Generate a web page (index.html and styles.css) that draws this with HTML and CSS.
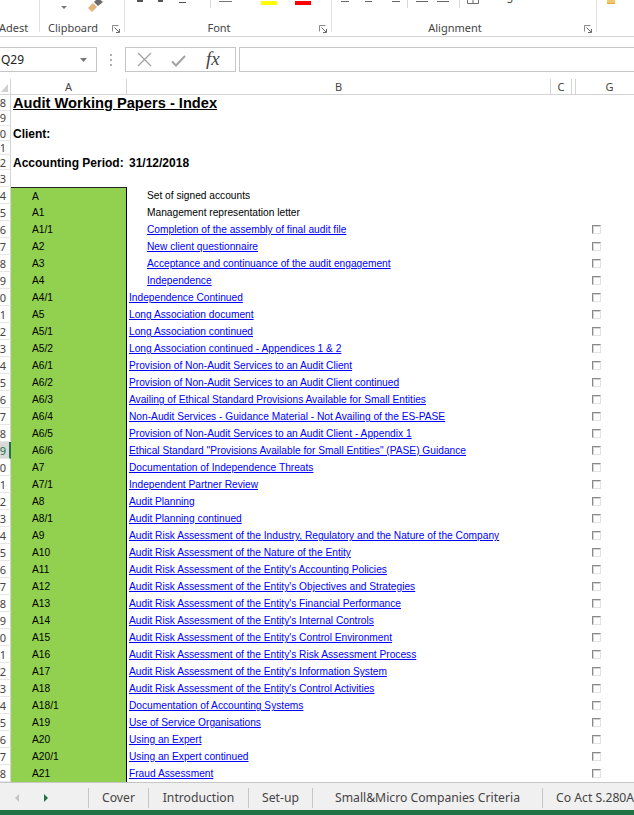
FILE: index.html
```html
<!DOCTYPE html>
<html>
<head>
<meta charset="utf-8">
<title>Audit Working Papers - Index</title>
<link rel="stylesheet" href="styles.css">
</head>
<body>
<div class="ribbon">
  <div class="grp g1">
    <div class="ctrls"></div>
    <div class="glrow"><span class="glabel left">Adest</span></div>
  </div>
  <div class="sep"></div>
  <div class="grp g2">
    <div class="ctrls">
      <span class="caret-s"></span>
      <svg class="brush" width="16" height="12" viewBox="0 0 16 12"><polygon points="0,8 5,3 9,7 4,12" fill="#e4b47a"/><polygon points="6,2 10,-2 15,2 10,6" fill="#6b6b6b"/></svg>
    </div>
    <div class="glrow"><span class="glabel left clip">Clipboard</span>
      <svg class="launch" width="8" height="8" viewBox="0 0 8 8"><path d="M0.5 6.5V0.5H6.5" stroke="#8a8a8a" fill="none"/><path d="M2.5 2.5L7 7M7.5 4v3.5H4" stroke="#6d6d6d" fill="none"/></svg>
    </div>
  </div>
  <div class="sep"></div>
  <div class="grp g3">
    <div class="ctrls">
      <span class="mk m1"></span><span class="mk m2"></span><span class="mk m3"></span>
      <span class="isep s1"></span>
      <span class="bline"></span>
      <span class="cbar yellow"></span><span class="cbar red"></span>
    </div>
    <div class="glrow"><span class="glabel">Font</span>
      <svg class="launch" width="8" height="8" viewBox="0 0 8 8"><path d="M0.5 6.5V0.5H6.5" stroke="#8a8a8a" fill="none"/><path d="M2.5 2.5L7 7M7.5 4v3.5H4" stroke="#6d6d6d" fill="none"/></svg>
    </div>
  </div>
  <div class="sep"></div>
  <div class="grp g4">
    <div class="ctrls">
      <span class="al a1"></span><span class="al a2"></span><span class="al a3"></span>
      <span class="isep s2"></span>
      <span class="indic i1"></span><span class="indic i2"></span>
      <span class="isep s3"></span>
      <svg class="merge" width="12" height="4" viewBox="0 0 12 4"><path d="M0.5 0V3.5H11.5V0M6 0V3.5" stroke="#6d6d6d" fill="none"/></svg>
      <span class="mtext">Merge &amp; Center</span>
    </div>
    <div class="glrow"><span class="glabel">Alignment</span>
      <svg class="launch" width="8" height="8" viewBox="0 0 8 8"><path d="M0.5 6.5V0.5H6.5" stroke="#8a8a8a" fill="none"/><path d="M2.5 2.5L7 7M7.5 4v3.5H4" stroke="#6d6d6d" fill="none"/></svg>
    </div>
  </div>
  <div class="sep"></div>
  <div class="grp g5">
    <div class="ctrls"><span class="cond"></span></div>
  </div>
</div>

<div class="fbar">
  <div class="namebox"><span>Q29</span>
    <svg width="7" height="4" viewBox="0 0 7 4"><polygon points="0,0 7,0 3.5,4" fill="#777"/></svg>
  </div>
  <svg class="dots" width="2" height="14" viewBox="0 0 2 14"><rect x="0" y="1" width="2" height="2" fill="#b0b0b0"/><rect x="0" y="6" width="2" height="2" fill="#b0b0b0"/><rect x="0" y="11" width="2" height="2" fill="#b0b0b0"/></svg>
  <div class="fxbox">
    <svg class="xicon" width="15" height="15" viewBox="0 0 15 15"><path d="M1 1L14 14M14 1L1 14" stroke="#a3a3a3" stroke-width="1.3"/></svg>
    <svg class="vicon" width="15" height="12" viewBox="0 0 15 12"><path d="M1 6.5L5 10.5L14 1" stroke="#a3a3a3" stroke-width="2" fill="none"/></svg>
    <span class="fx">fx</span>
  </div>
  <div class="finput"></div>
</div>

<div class="sheet">
  <div class="r colhdr">
    <div class="corner"><svg width="7" height="8" viewBox="0 0 7 8"><polygon points="7,0 7,8 0,8" fill="#d0d0d0"/></svg></div>
    <div class="hc">A</div><div class="hc">B</div><div class="hc">C</div><div class="hc hid"></div><div class="hc nob">G</div>
  </div>

  <div class="r h15"><div class="rh">8</div><div class="c ca"><span class="title">Audit Working Papers - Index</span></div><div class="c"></div><div class="c"></div><div class="c"></div><div class="c"></div></div>
  <div class="r h16"><div class="rh">9</div><div class="c ca"></div><div class="c"></div><div class="c"></div><div class="c"></div><div class="c"></div></div>
  <div class="r h15"><div class="rh">10</div><div class="c ca"><span class="lbl">Client:</span></div><div class="c"></div><div class="c"></div><div class="c"></div><div class="c"></div></div>
  <div class="r h14"><div class="rh">11</div><div class="c ca"></div><div class="c"></div><div class="c"></div><div class="c"></div><div class="c"></div></div>
  <div class="r h15"><div class="rh">12</div><div class="c ca"><span class="lbl">Accounting Period:</span></div><div class="c cb"><span class="lbl">31/12/2018</span></div><div class="c"></div><div class="c"></div><div class="c"></div></div>
  <div class="r h17"><div class="rh">13</div><div class="c ca"></div><div class="c"></div><div class="c"></div><div class="c"></div><div class="c"></div></div>

  <div class="r d first"><div class="rh">14</div><div class="c ca g">A</div><div class="c cb indent">Set of signed accounts</div><div class="c"></div><div class="c"></div><div class="c cg"></div></div>
  <div class="r d"><div class="rh">15</div><div class="c ca g">A1</div><div class="c cb indent">Management representation letter</div><div class="c"></div><div class="c"></div><div class="c cg"></div></div>
  <div class="r d"><div class="rh">16</div><div class="c ca g">A1/1</div><div class="c cb indent"><a href="#">Completion of the assembly of final audit file</a></div><div class="c"></div><div class="c"></div><div class="c cg"><span class="cbx"></span></div></div>
  <div class="r d"><div class="rh">17</div><div class="c ca g">A2</div><div class="c cb indent"><a href="#">New client questionnaire</a></div><div class="c"></div><div class="c"></div><div class="c cg"><span class="cbx"></span></div></div>
  <div class="r d"><div class="rh">18</div><div class="c ca g">A3</div><div class="c cb indent"><a href="#">Acceptance and continuance of the audit engagement</a></div><div class="c"></div><div class="c"></div><div class="c cg"><span class="cbx"></span></div></div>
  <div class="r d"><div class="rh">19</div><div class="c ca g">A4</div><div class="c cb indent"><a href="#">Independence</a></div><div class="c"></div><div class="c"></div><div class="c cg"><span class="cbx"></span></div></div>
  <div class="r d"><div class="rh">20</div><div class="c ca g">A4/1</div><div class="c cb"><a href="#">Independence Continued</a></div><div class="c"></div><div class="c"></div><div class="c cg"><span class="cbx"></span></div></div>
  <div class="r d"><div class="rh">21</div><div class="c ca g">A5</div><div class="c cb"><a href="#">Long Association document</a></div><div class="c"></div><div class="c"></div><div class="c cg"><span class="cbx"></span></div></div>
  <div class="r d"><div class="rh">22</div><div class="c ca g">A5/1</div><div class="c cb"><a href="#">Long Association continued</a></div><div class="c"></div><div class="c"></div><div class="c cg"><span class="cbx"></span></div></div>
  <div class="r d"><div class="rh">23</div><div class="c ca g">A5/2</div><div class="c cb"><a href="#">Long Association continued - Appendices 1 &amp; 2</a></div><div class="c"></div><div class="c"></div><div class="c cg"><span class="cbx"></span></div></div>
  <div class="r d"><div class="rh">24</div><div class="c ca g">A6/1</div><div class="c cb"><a href="#">Provision of Non-Audit Services to an Audit Client</a></div><div class="c"></div><div class="c"></div><div class="c cg"><span class="cbx"></span></div></div>
  <div class="r d"><div class="rh">25</div><div class="c ca g">A6/2</div><div class="c cb"><a href="#">Provision of Non-Audit Services to an Audit Client continued</a></div><div class="c"></div><div class="c"></div><div class="c cg"><span class="cbx"></span></div></div>
  <div class="r d"><div class="rh">26</div><div class="c ca g">A6/3</div><div class="c cb"><a href="#">Availing of Ethical Standard Provisions Available for Small Entities</a></div><div class="c"></div><div class="c"></div><div class="c cg"><span class="cbx"></span></div></div>
  <div class="r d"><div class="rh">27</div><div class="c ca g">A6/4</div><div class="c cb"><a href="#">Non-Audit Services - Guidance Material - Not Availing of the ES-PASE</a></div><div class="c"></div><div class="c"></div><div class="c cg"><span class="cbx"></span></div></div>
  <div class="r d"><div class="rh">28</div><div class="c ca g">A6/5</div><div class="c cb"><a href="#">Provision of Non-Audit Services to an Audit Client - Appendix 1</a></div><div class="c"></div><div class="c"></div><div class="c cg"><span class="cbx"></span></div></div>
  <div class="r d"><div class="rh sel">29</div><div class="c ca g">A6/6</div><div class="c cb"><a href="#">Ethical Standard "Provisions Available for Small Entities" (PASE) Guidance</a></div><div class="c"></div><div class="c"></div><div class="c cg"><span class="cbx"></span></div></div>
  <div class="r d"><div class="rh">30</div><div class="c ca g">A7</div><div class="c cb"><a href="#">Documentation of Independence Threats</a></div><div class="c"></div><div class="c"></div><div class="c cg"><span class="cbx"></span></div></div>
  <div class="r d"><div class="rh">31</div><div class="c ca g">A7/1</div><div class="c cb"><a href="#">Independent Partner Review</a></div><div class="c"></div><div class="c"></div><div class="c cg"><span class="cbx"></span></div></div>
  <div class="r d"><div class="rh">32</div><div class="c ca g">A8</div><div class="c cb"><a href="#">Audit Planning</a></div><div class="c"></div><div class="c"></div><div class="c cg"><span class="cbx"></span></div></div>
  <div class="r d"><div class="rh">33</div><div class="c ca g">A8/1</div><div class="c cb"><a href="#">Audit Planning continued</a></div><div class="c"></div><div class="c"></div><div class="c cg"><span class="cbx"></span></div></div>
  <div class="r d"><div class="rh">34</div><div class="c ca g">A9</div><div class="c cb"><a href="#">Audit Risk Assessment of the Industry, Regulatory and the Nature of the Company</a></div><div class="c"></div><div class="c"></div><div class="c cg"><span class="cbx"></span></div></div>
  <div class="r d"><div class="rh">35</div><div class="c ca g">A10</div><div class="c cb"><a href="#">Audit Risk Assessment of the Nature of the Entity</a></div><div class="c"></div><div class="c"></div><div class="c cg"><span class="cbx"></span></div></div>
  <div class="r d"><div class="rh">36</div><div class="c ca g">A11</div><div class="c cb"><a href="#">Audit Risk Assessment of the Entity's Accounting Policies</a></div><div class="c"></div><div class="c"></div><div class="c cg"><span class="cbx"></span></div></div>
  <div class="r d"><div class="rh">37</div><div class="c ca g">A12</div><div class="c cb"><a href="#">Audit Risk Assessment of the Entity's Objectives and Strategies</a></div><div class="c"></div><div class="c"></div><div class="c cg"><span class="cbx"></span></div></div>
  <div class="r d"><div class="rh">38</div><div class="c ca g">A13</div><div class="c cb"><a href="#">Audit Risk Assessment of the Entity's Financial Performance</a></div><div class="c"></div><div class="c"></div><div class="c cg"><span class="cbx"></span></div></div>
  <div class="r d"><div class="rh">39</div><div class="c ca g">A14</div><div class="c cb"><a href="#">Audit Risk Assessment of the Entity's Internal Controls</a></div><div class="c"></div><div class="c"></div><div class="c cg"><span class="cbx"></span></div></div>
  <div class="r d"><div class="rh">40</div><div class="c ca g">A15</div><div class="c cb"><a href="#">Audit Risk Assessment of the Entity's Control Environment</a></div><div class="c"></div><div class="c"></div><div class="c cg"><span class="cbx"></span></div></div>
  <div class="r d"><div class="rh">41</div><div class="c ca g">A16</div><div class="c cb"><a href="#">Audit Risk Assessment of the Entity's Risk Assessment Process</a></div><div class="c"></div><div class="c"></div><div class="c cg"><span class="cbx"></span></div></div>
  <div class="r d"><div class="rh">42</div><div class="c ca g">A17</div><div class="c cb"><a href="#">Audit Risk Assessment of the Entity's Information System</a></div><div class="c"></div><div class="c"></div><div class="c cg"><span class="cbx"></span></div></div>
  <div class="r d"><div class="rh">43</div><div class="c ca g">A18</div><div class="c cb"><a href="#">Audit Risk Assessment of the Entity's Control Activities</a></div><div class="c"></div><div class="c"></div><div class="c cg"><span class="cbx"></span></div></div>
  <div class="r d"><div class="rh">44</div><div class="c ca g">A18/1</div><div class="c cb"><a href="#">Documentation of Accounting Systems</a></div><div class="c"></div><div class="c"></div><div class="c cg"><span class="cbx"></span></div></div>
  <div class="r d"><div class="rh">45</div><div class="c ca g">A19</div><div class="c cb"><a href="#">Use of Service Organisations</a></div><div class="c"></div><div class="c"></div><div class="c cg"><span class="cbx"></span></div></div>
  <div class="r d"><div class="rh">46</div><div class="c ca g">A20</div><div class="c cb"><a href="#">Using an Expert</a></div><div class="c"></div><div class="c"></div><div class="c cg"><span class="cbx"></span></div></div>
  <div class="r d"><div class="rh">47</div><div class="c ca g">A20/1</div><div class="c cb"><a href="#">Using an Expert continued</a></div><div class="c"></div><div class="c"></div><div class="c cg"><span class="cbx"></span></div></div>
  <div class="r d"><div class="rh">48</div><div class="c ca g">A21</div><div class="c cb"><a href="#">Fraud Assessment</a></div><div class="c"></div><div class="c"></div><div class="c cg"><span class="cbx"></span></div></div>
</div>

<div class="tabbar">
  <div class="nav"><span class="tri tl"></span><span class="tri tr"></span></div>
  <div class="tab w60">Cover</div>
  <div class="tab w100">Introduction</div>
  <div class="tab w64">Set-up</div>
  <div class="tab w230">Small&amp;Micro Companies Criteria</div>
  <div class="tab last">Co Act S.280A Audit Exemption</div>
</div>
<div class="status"></div>
</body>
</html>
```

FILE: styles.css
```css
* { box-sizing: border-box; margin: 0; padding: 0; }
html, body { width: 634px; height: 815px; overflow: hidden; background: #fff; }
body { font-family: "Noto Sans", "Liberation Sans", sans-serif; color: #444; }

/* ribbon */
.ribbon { display: flex; height: 37px; border-bottom: 1px solid #d5d5d5; overflow: hidden; }
.grp { display: flex; flex-direction: column; height: 36px; flex: none; }
.g1 { width: 39px; }
.g2 { width: 84px; }
.g3 { width: 206px; }
.g4 { width: 264px; }
.g5 { width: 40px; }
.sep { width: 1px; height: 32px; background: #e1e1e1; flex: none; }
.ctrls { height: 21px; display: flex; align-items: flex-start; flex: none; }
.glrow { display: flex; align-items: center; height: 14px; }
.glabel { flex: 1; font-size: 11px; line-height: 14px; text-align: center; white-space: nowrap; color: #444; padding-right: 6px; }
.glabel.left { text-align: left; padding-right: 0; }
.g1 .glabel { margin-left: -1px; }
.glabel.clip { padding-left: 8px; }
.launch { flex: none; margin-right: 4px; margin-top: 2px; }

.caret-s { margin-left: 21px; margin-top: 6px; width: 0; height: 0; border-left: 3px solid transparent; border-right: 3px solid transparent; border-top: 3px solid #777; }
.brush { margin-left: 21px; }
.mk { height: 2px; background: #555; }
.m1 { margin-left: 12px; width: 6px; }
.m2 { margin-left: 15px; width: 5px; }
.m3 { margin-left: 16px; width: 7px; height: 1px; margin-top: 2px; }
.isep { width: 1px; height: 8px; background: #d8d8d8; }
.s1 { margin-left: 24px; }
.bline { margin-left: 8px; width: 13px; height: 1px; margin-top: 1px; background: #777; }
.cbar { width: 16px; height: 4px; margin-top: 1px; }
.yellow { margin-left: 29px; background: #ffff00; }
.red { margin-left: 18px; background: #ff0000; }
.al { height: 1px; margin-top: 1px; background: #666; }
.a1 { margin-left: 9px; width: 8px; }
.a2 { margin-left: 16px; width: 7px; }
.a3 { margin-left: 20px; width: 8px; }
.s2 { margin-left: 7px; }
.indic { width: 12px; height: 1px; margin-top: 1px; background: #666; }
.i1 { margin-left: 8px; }
.i2 { margin-left: 9px; }
.s3 { margin-left: 10px; }
.merge { margin-left: 7px; }
.mtext { margin-left: 7px; margin-top: -11px; font-size: 11px; line-height: 14px; color: #444; white-space: nowrap; }
.cond { margin-left: 10px; width: 8px; height: 4px; background: #f2c46b; border-bottom: 1px solid #e0a63a; }

/* formula bar */
.fbar { display: flex; align-items: flex-start; height: 42px; padding-top: 10px; }
.namebox { flex: none; margin-left: -5px; width: 102px; height: 25px; border: 1px solid #c6c6c6; display: flex; align-items: center; justify-content: space-between; padding: 0 9px 0 5px; font-size: 12px; color: #222; }
.dots { flex: none; margin-left: 13px; margin-top: 6px; }
.fxbox { flex: none; margin-left: 13px; width: 111px; height: 25px; border: 1px solid #c6c6c6; display: flex; align-items: center; padding-left: 11px; }
.xicon { flex: none; }
.vicon { flex: none; margin-left: 19px; margin-top: 2px; }
.fx { margin-left: 20px; font-family: "Liberation Serif", serif; font-style: italic; font-size: 19px; line-height: 20px; color: #444; margin-top: -2px; }
.finput { flex: 1; margin-left: 3px; margin-right: -10px; height: 25px; border: 1px solid #c6c6c6; }

/* sheet */
.sheet { height: 703px; overflow: hidden; }
.r { display: grid; grid-template-columns: 11px 116px 424px 21px 4px 67px; }
.colhdr { height: 16px; border-bottom: 1px solid #d4d4d4; }
.corner { border-right: 1px solid #d4d4d4; display: flex; align-items: flex-end; justify-content: flex-end; padding: 0 2px 2px 0; }
.hc { border-right: 1px solid #d4d4d4; font-size: 11px; line-height: 15px; text-align: center; color: #444; }
.hc.nob { border-right: none; }
.h14 { height: 14px; } .h15 { height: 15px; } .h16 { height: 16px; } .h17 { height: 17px; }
.d { height: 17px; }

.rh { border-right: 1px solid #d4d4d4; border-bottom: 1px solid #e6e6e6; display: flex; justify-content: flex-end; align-items: center; padding-right: 4px; font-size: 11px; color: #444; overflow: hidden; white-space: nowrap; }
.rh.sel { background: #d9d9d9; color: #217346; border-right: 2px solid #217346; padding-right: 3px; }

.c { white-space: nowrap; font-family: "Liberation Sans", Arial, sans-serif; font-size: 10.2px; color: #000; display: flex; align-items: center; }
.ca { padding-left: 2px; }
.ca.g { background: #92d050; border-right: 1px solid #000; padding-left: 21px; }
.first .ca.g { border-top: 1px solid #222; }
.cb { padding-left: 2px; }
.cb.indent { padding-left: 20px; }
.cg { padding-left: 16px; }
a { color: #0000ff; text-decoration: underline; text-underline-offset: 1px; }

.title { font-weight: bold; font-size: 14.67px; text-decoration: underline; color: #000; }
.lbl { font-weight: bold; font-size: 12px; color: #000; }

.cbx { width: 9px; height: 9px; background: #fff; border: 1px solid; border-color: #8a8a8a #e2e2e2 #e2e2e2 #8a8a8a; box-shadow: inset 1px 1px 0 #d4d4d4; }

/* tabs */
.tabbar { height: 28px; border-top: 1px solid #c6c6c6; background: #f0f0f0; display: flex; align-items: center; padding-top: 2px; white-space: nowrap; overflow: hidden; }
.nav { flex: none; width: 89px; height: 20px; border-right: 1px solid #c6c6c6; display: flex; align-items: center; }
.tri { width: 0; height: 0; border-top: 4px solid transparent; border-bottom: 4px solid transparent; }
.tl { margin-left: 15px; border-right: 4px solid #c3c3c3; }
.tr { margin-left: 25px; border-left: 4px solid #217346; }
.tab { flex: none; height: 20px; border-right: 1px solid #c6c6c6; font-size: 12.2px; line-height: 20px; color: #444; text-align: center; }
.w60 { width: 60px; } .w100 { width: 100px; } .w64 { width: 64px; } .w230 { width: 230px; }
.tab.last { border-right: none; text-align: left; padding-left: 13px; }
.status { height: 5px; background: #217346; }
```
